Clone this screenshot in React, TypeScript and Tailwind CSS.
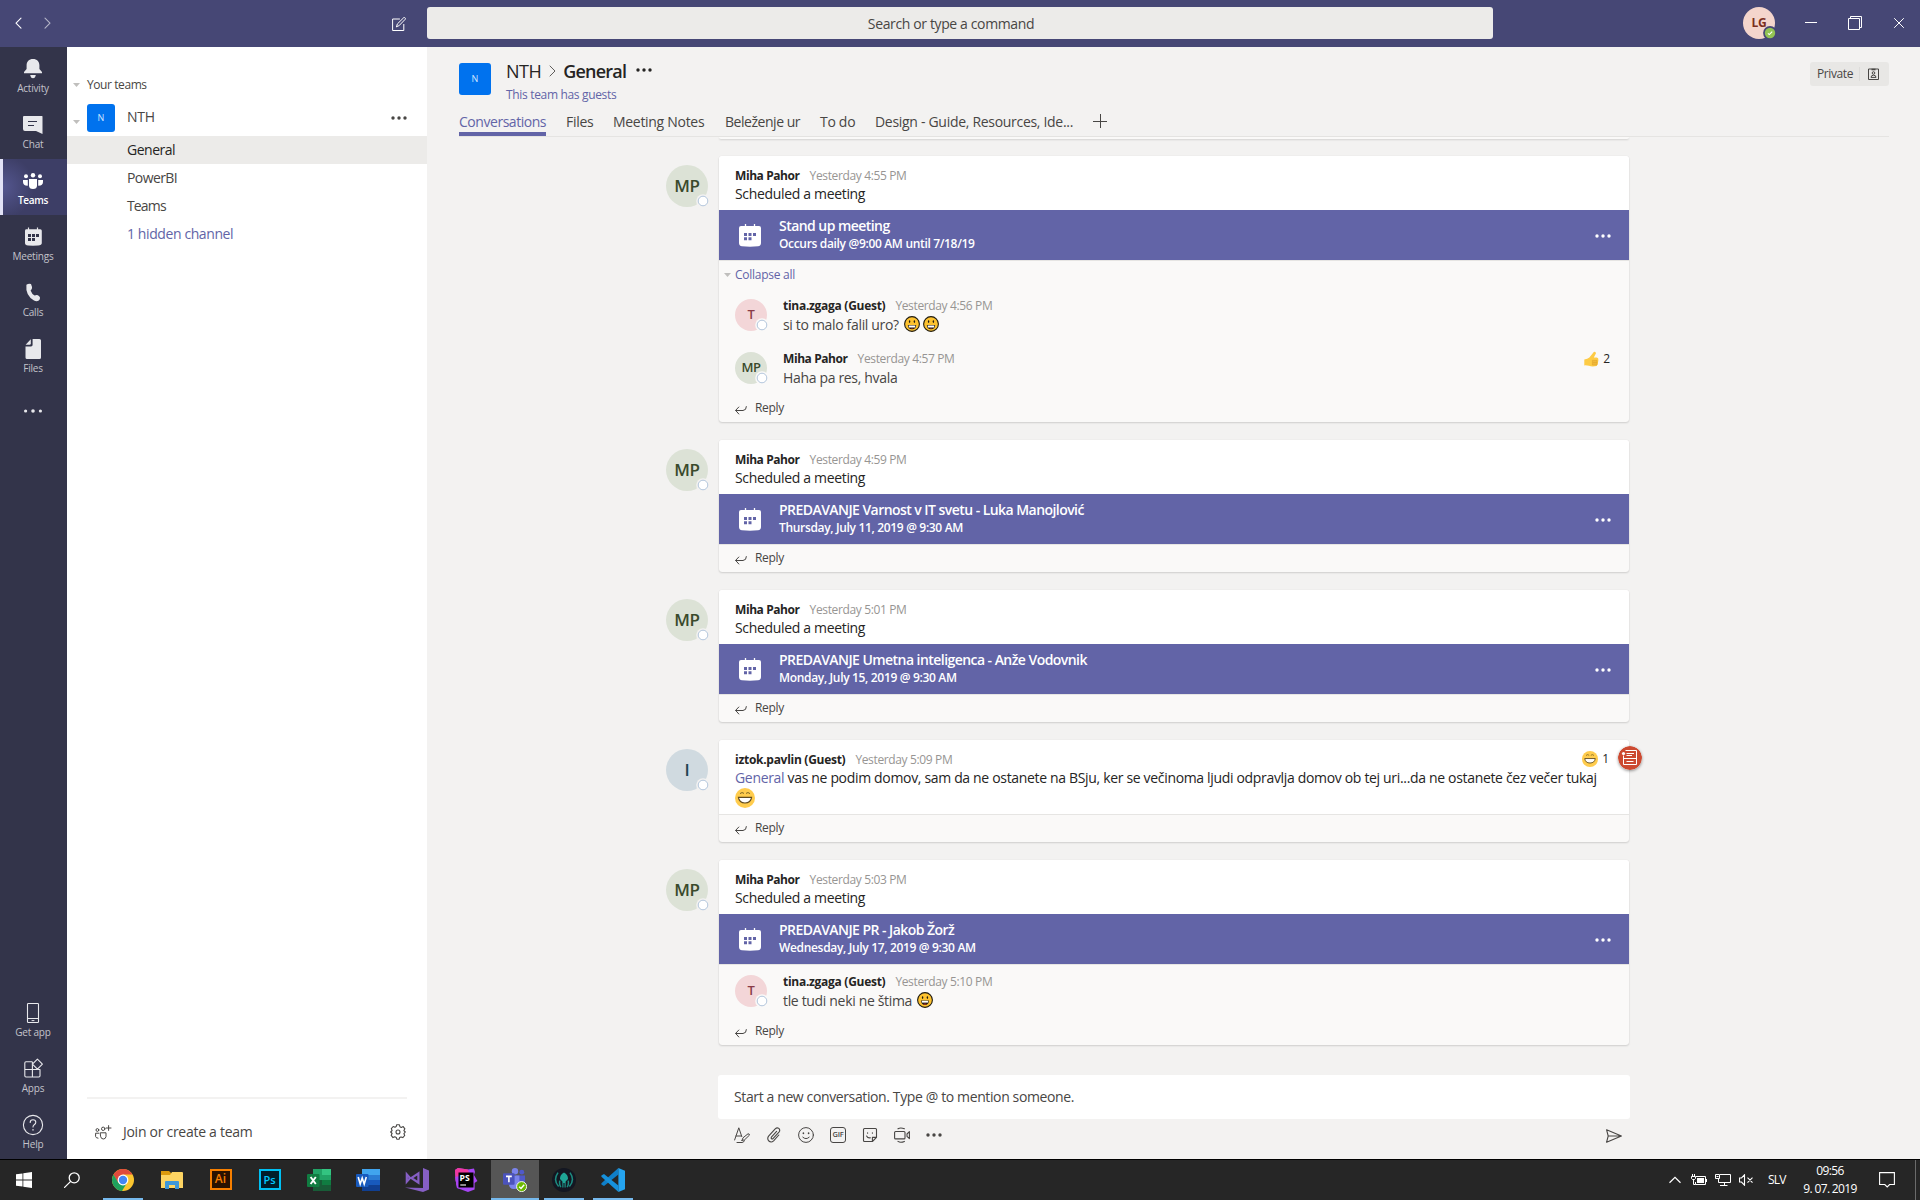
import type { ReactNode } from "react";

const svgLine = {
  fill: "none",
  stroke: "currentColor",
  strokeLinecap: "round",
  strokeLinejoin: "round",
} as const;

function Dots({ className }: { className?: string }) {
  return (
    <svg viewBox="0 0 16 4" className={`h-1 w-4 shrink-0 ${className ?? ""}`} fill="currentColor">
      <circle cx="2" cy="2" r="1.7" />
      <circle cx="8" cy="2" r="1.7" />
      <circle cx="14" cy="2" r="1.7" />
    </svg>
  );
}

function Caret() {
  return (
    <svg viewBox="0 0 7 4" className="h-1 w-[7px] shrink-0 text-[#c0bfbd]" fill="currentColor">
      <path d="M0 0H7L3.5 4Z" />
    </svg>
  );
}

/* ---------- Title bar ---------- */

function TitleBar() {
  return (
    <header className="flex h-[47px] shrink-0 items-start bg-[#464775] text-white">
      <svg viewBox="0 0 67 47" className="h-[47px] w-[67px] shrink-0" {...svgLine} strokeWidth="1.1">
        <path d="M21 18.2L16 23.2L21 28.2" />
        <path d="M45 18.2L50 23.2L45 28.2" opacity=".6" />
      </svg>
      <div className="flex h-[47px] w-[360px] shrink-0 items-center justify-end pr-[21px]">
        <svg viewBox="0 0 14 14" className="h-3.5 w-3.5" {...svgLine} strokeWidth="1">
          <path d="M7.5 2H.6V13.5H11.8V7.4" />
          <path d="M4.6 9.6L5.3 7L11.8 .6C12.8 .2 13.8 1.2 13.3 2.2L6.9 8.8L4.6 9.6Z" />
        </svg>
      </div>
      <div className="mt-[7px] flex h-8 w-[1066px] shrink-0 items-center justify-center rounded-[3px] bg-[#ecebe9] pr-[18px] text-[14px] tracking-[-0.37px] text-[#484644]">
        Search or type a command
      </div>
      <div className="relative mt-[7px] ml-[250px] flex h-8 w-8 shrink-0 items-center justify-center rounded-full bg-[#f4d5cc] text-[12px] font-bold tracking-[-0.3px] text-[#7b2f1e]">
        LG
        <svg viewBox="0 0 14 14" className="absolute -right-[2px] -bottom-[1px] h-3.5 w-3.5">
          <circle cx="7" cy="7" r="6.9" fill="#464775" />
          <circle cx="7" cy="7" r="5.2" fill="#92c353" />
          <path d="M4.9 7.3L6.3 8.6L9.2 5.6" fill="none" stroke="#fff" strokeWidth="1.1" />
        </svg>
      </div>
      <svg viewBox="0 0 145 47" className="h-[47px] w-[145px] shrink-0" fill="none" stroke="#fff" strokeWidth="1">
        <path d="M30 22.5H42" />
        <path d="M73.5 18.5H84.5V29.5H73.5ZM75.5 18V16.5H86.5V27.5H85" />
        <path d="M119.2 18.2L128.8 27.8M128.8 18.2L119.2 27.8" />
      </svg>
    </header>
  );
}

/* ---------- App rail ---------- */

const railIcons: Record<string, ReactNode> = {
  Activity: (
    <g fill="currentColor">
      <path d="M11 1C7 1 4.6 3.6 4.6 7.2V11L2 14V15.3H20V14L17.4 11V7.2C17.4 3.6 15 1 11 1Z" />
      <path d="M8.2 17H13.8C13.5 19 12.5 20.3 11 20.3S8.5 19 8.2 17Z" />
    </g>
  ),
  Chat: (
    <g>
      <path d="M2 2H20Q20.5 2 20.5 2.5V20L14 17H3Q1 17 1 15V3Q1 2 2 2Z" fill="currentColor" />
      <path d="M6 7.5H15M6 11.5H12" stroke="#33344a" strokeWidth="1.2" />
    </g>
  ),
  Teams: (
    <g fill="currentColor">
      <circle cx="4" cy="6.3" r="2" />
      <circle cx="11" cy="5.2" r="2.2" />
      <circle cx="18" cy="6.3" r="2" />
      <path d="M7 9H15V15.5Q15 19 11 19T7 15.5Z" />
      <path d="M1 10H5.8V15.4L5.5 15.8Q1 15.6 1 12Z" />
      <path d="M21 10H16.2V15.4L16.5 15.8Q21 15.6 21 12Z" />
    </g>
  ),
  Meetings: (
    <g>
      <path d="M6.5 1.5V5M15.5 1.5V5" stroke="currentColor" strokeWidth="1.2" />
      <path d="M4 3.2H18.3Q19.8 3.2 19.8 4.7V17Q19.8 19.3 16 19.6Q11 19.9 6 19.6Q3 19.3 3 17V4.7Q3 3.2 4 3.2Z" fill="currentColor" />
      <path d="M6 8H9V11H6ZM10 8H13V11H10ZM14 8H17V11H14ZM6 12H9V15H6ZM10 12H13V15H10Z" fill="#33344a" />
    </g>
  ),
  Calls: (
    <path
      d="M4.4 2.8Q6.5 1.2 9 1.9Q10.3 5 10 6.3Q9.6 7.8 8.6 8.5Q9.8 12 12.6 13.6Q14.2 12.6 15.2 13Q17.4 13.8 18 15.5Q18.2 17.3 16.8 18.6Q14.6 19.8 12 18.6Q3.2 13.4 4.4 2.8Z"
      fill="currentColor"
    />
  ),
  Files: (
    <g fill="currentColor">
      <path d="M10.6 1H17.5Q19 1 19 2.5V19.5Q19 21 17.5 21H5Q3.5 21 3.5 19.5V8.4H9Q10.6 8.4 10.6 7Z" />
      <path d="M8.8 1.3V5.6Q8.8 6.8 7.6 6.8H3.6Z" />
    </g>
  ),
  "Get app": (
    <g {...svgLine}>
      <rect x="5.5" y="1.5" width="11" height="19" rx=".8" strokeWidth="1.1" />
      <path d="M5.5 16.5H16.5M10 18.6H12" />
    </g>
  ),
  Apps: (
    <g {...svgLine} strokeWidth="1.1">
      <path d="M10 3.8H4Q2.8 3.8 2.8 5V17.8Q2.8 19 4 19H16.8Q18 19 18 17.8V12M2.8 11.5H18M10.4 4V19" />
      <path d="M15.4 1.2L20.4 6.2L15.4 11.2L10.4 6.2Z" fill="#33344a" />
    </g>
  ),
  Help: (
    <g {...svgLine} strokeWidth="1.1">
      <circle cx="11" cy="11" r="9.6" />
      <path d="M8.2 8.4Q8.2 5.8 11 5.8T13.8 8.3Q13.8 9.8 12.2 10.8Q11 11.6 11 13" />
      <path d="M11 15.6V16" strokeWidth="1.4" />
    </g>
  ),
};

function RailItem({ name, active }: { name: string; active?: boolean }) {
  return (
    <div
      className={
        active
          ? "flex h-14 flex-col items-center border-l-[3px] border-[#e2e2f6] bg-[radial-gradient(circle_at_left,#54568f,#3d3e66_45%)] pt-[11px] pr-1 text-white"
          : "flex h-14 flex-col items-center pt-[11px] pr-px text-[#e8e8ec]"
      }
    >
      <svg viewBox="0 0 22 22" className="h-[22px] w-[22px]">
        {railIcons[name]}
      </svg>
      <span
        className={
          active
            ? "text-[10px] leading-[16px] font-semibold tracking-[-0.35px]"
            : "text-[10px] leading-[16px] font-medium tracking-[-0.2px] text-[#c3c3cb]"
        }
      >
        {name}
      </span>
    </div>
  );
}

function Rail() {
  return (
    <nav className="flex w-[67px] shrink-0 flex-col bg-[#33344a]">
      <RailItem name="Activity" />
      <RailItem name="Chat" />
      <RailItem name="Teams" active />
      <RailItem name="Meetings" />
      <RailItem name="Calls" />
      <RailItem name="Files" />
      <div className="flex h-14 items-center justify-center pr-px text-[#e8e8ec]">
        <svg viewBox="0 0 18 4" className="h-1 w-[18px]" fill="currentColor">
          <circle cx="1.6" cy="2" r="1.6" />
          <circle cx="9" cy="2" r="1.8" />
          <circle cx="16.4" cy="2" r="1.6" />
        </svg>
      </div>
      <div className="mt-auto">
        <RailItem name="Get app" />
        <RailItem name="Apps" />
        <RailItem name="Help" />
      </div>
    </nav>
  );
}

/* ---------- Teams list ---------- */

function TeamsPanel() {
  return (
    <aside className="flex w-[360px] shrink-0 flex-col bg-white text-[14px] text-[#484644]">
      <div className="mt-[29px] flex h-[18px] items-center gap-[7px] pl-1.5 text-[12px] tracking-[-0.42px]">
        <Caret />
        <span>Your teams</span>
      </div>
      <div className="mt-2.5 flex h-7 items-center pl-1.5">
        <div className="mt-2">
          <Caret />
        </div>
        <div className="ml-[7px] flex h-7 w-7 items-center justify-center rounded-[3px] bg-[#0072ee] text-[9px] text-[#cfe4ff]">N</div>
        <span className="ml-3 pb-0.5 leading-[26px] tracking-[-0.3px]">NTH</span>
        <Dots className="mr-5 ml-auto" />
      </div>
      <div className="mt-1 h-7 bg-[#ecebe9] pl-[60px] leading-7 tracking-[-0.5px] text-[#252423]">General</div>
      <div className="h-7 pl-[60px] leading-7 tracking-[-0.6px]">PowerBI</div>
      <div className="h-7 pl-[60px] leading-7 tracking-[-0.85px]">Teams</div>
      <div className="h-7 pl-[60px] leading-7 tracking-[-0.4px] text-[#6264a7]">1 hidden channel</div>
      <div className="mx-5 mt-auto h-0.5 bg-[#f3f2f1]" />
      <div className="flex h-[60px] items-center pt-1.5 pr-[21px] pl-7">
        <svg viewBox="0 0 17 15" className="h-[15px] w-[17px]" {...svgLine} strokeWidth="1">
          <circle cx="2.4" cy="5" r="1.4" />
          <circle cx="8.2" cy="3.8" r="1.7" />
          <path d="M3.8 8.2H.6V11.5Q.8 13 3 13.2M5.6 7.8H11V11.6Q10.6 14 8.3 14T5.6 11.6ZM13.6 .6V5.4M11.2 3H16" />
        </svg>
        <span className="ml-[11px] pb-0.5 tracking-[-0.28px]">Join or create a team</span>
        <svg viewBox="0 0 16 16" className="ml-auto h-4 w-4" {...svgLine} strokeWidth="1.1">
          <circle cx="8" cy="8" r="2" />
          <path d="M6.6 .8H9.4L9.9 2.7L11.3 3.4L13.2 2.6L14.9 4.8L13.9 6.6L15.3 8L13.9 9.6L14.7 11.5L12.8 13.6L11 12.9L9.6 13.5L9.2 15.2H6.8L6.3 13.5L4.8 12.8L3 13.6L1.2 11.3L2.1 9.5L.7 8L2.1 6.5L1.3 4.6L3.2 2.5L5 3.2L6.2 2.6Z" />
        </svg>
      </div>
    </aside>
  );
}

/* ---------- Channel header ---------- */

function ChannelHeader() {
  return (
    <div className="mr-[31px] ml-8 h-[90px] shrink-0 border-b border-[#e5e4e2] text-[#252423]">
      <div className="flex h-[65px] items-start">
        <div className="mt-4 flex h-8 w-8 items-center justify-center rounded-[3px] bg-[#0072ee] text-[9px] text-[#cfe4ff]">N</div>
        <div className="ml-[15px] pt-3">
          <div className="flex h-6 items-center text-[18px] tracking-[-0.5px]">
            <span>NTH</span>
            <svg viewBox="0 0 7 12" className="mx-2 h-3 w-[7px]" {...svgLine} strokeWidth="1" stroke="#605e5c">
              <path d="M1 1L6 6L1 11" />
            </svg>
            <span className="-ml-px font-semibold tracking-[-0.8px]">General</span>
            <Dots className="mb-0.5 ml-2.5" />
          </div>
          <div className="pt-px text-[12px] leading-[22px] tracking-[-0.33px] text-[#6264a7]">This team has guests</div>
        </div>
        <div className="mt-[15px] ml-auto flex h-6 w-[79px] items-center rounded-[3px] bg-[#e8e7e5] pl-[7px] text-[12px] tracking-[-0.4px] text-[#484644]">
          <span className="w-[37px]">Private</span>
          <span className="ml-[5px] h-3.5 w-px bg-[#dddcda]" />
          <svg viewBox="0 0 11 12" className="ml-2 h-3 w-[11px]" fill="none" stroke="currentColor" strokeWidth="1">
            <path d="M.5 1H10.5V11.5H.5Z" />
            <path d="M3.5 1.5H7.5" strokeWidth="1.6" />
            <circle cx="5.5" cy="5" r="1.3" />
            <path d="M3 9.4Q3 7.2 5.5 7.2T8 9.4Z" />
          </svg>
        </div>
      </div>
      <div className="flex h-6 items-start gap-5 text-[14px] leading-[19px] tracking-[-0.3px] text-[#484644]">
        <span className="h-6 w-[87px] border-b-4 border-[#6264a7] tracking-[-0.46px] text-[#6264a7]">Conversations</span>
        <span className="w-[27px]">Files</span>
        <span className="w-[92px] whitespace-nowrap">Meeting Notes</span>
        <span className="w-[75px] tracking-[-0.46px] whitespace-nowrap">Beleženje ur</span>
        <span className="w-[35px] whitespace-nowrap">To do</span>
        <span className="w-[198px] whitespace-nowrap">Design - Guide, Resources, Ide...</span>
        <svg viewBox="0 0 14 14" className="mt-0.5 h-3.5 w-3.5" fill="none" stroke="currentColor">
          <path d="M7.5 0V14M0 7.5H14" />
        </svg>
      </div>
    </div>
  );
}

/* ---------- Emoji ---------- */

function Grin({ open }: { open?: boolean }) {
  return (
    <svg viewBox="0 0 16 16" className="h-4 w-4 shrink-0">
      <circle cx="8" cy="8" r="7.4" fill="#fdc22f" stroke="#1d1a12" strokeWidth="1.1" />
      <ellipse cx="5.6" cy="5.6" rx=".7" ry="1.3" fill="#1d1a12" />
      <ellipse cx="10.4" cy="5.6" rx=".7" ry="1.3" fill="#1d1a12" />
      {open ? (
        <g>
          <path d="M4 8.6H12Q11.8 13 8 13T4 8.6Z" fill="#1d1a12" />
          <path d="M4.8 8.8H11.2V10.6H4.8Z" fill="#fff" />
          <path d="M6.2 12Q8 10.8 9.8 12Q8 13.2 6.2 12Z" fill="#e8392c" />
        </g>
      ) : (
        <g>
          <path d="M3.8 9H12.2Q12 13.2 8 13.2T3.8 9Z" fill="#1d1a12" />
          <path d="M4.6 9.4H11.4L11 11.6H5Z" fill="#fff" />
          <path d="M6.2 12.4H9.8L8 13Z" fill="#e8392c" />
        </g>
      )}
    </svg>
  );
}

function Laugh({ className }: { className: string }) {
  return (
    <svg viewBox="0 0 20 20" className={className}>
      <circle cx="10" cy="10" r="10" fill="#ffcc4d" />
      <path d="M5 5.6Q7 3.6 9 5.4M11 5.4Q13 3.6 15 5.6" fill="none" stroke="#6e5a1e" strokeWidth=".9" />
      <path d="M3.4 9.4H16.6Q15.8 15 10 15T3.4 9.4Z" fill="#fff" stroke="#5f4a1e" strokeWidth="1.1" />
    </svg>
  );
}

function Thumb() {
  return (
    <svg viewBox="0 0 15 16" className="h-4 w-[15px]">
      <path d="M.3 8.4Q3.6 8.2 5.4 6.6L9.8 1Q11.4 .4 12 2.2L9.8 6.6H12.8Q14.6 6.8 14.4 9Q14.2 13 12.6 15Q8 16 5 14.8Q2.4 14.2 .3 14.4Z" fill="#fdcb45" />
      <path d="M8.4 9.4H13V14H8.4ZM9 11.6H13" fill="#f0b93a" stroke="#e0a52c" strokeWidth=".6" />
    </svg>
  );
}

/* ---------- Conversation ---------- */

type AvatarProps = { kind: "MP" | "T" | "I"; small?: boolean };

const avatarColors = {
  MP: "bg-[#dce2d6] text-[#3a4a2c]",
  T: "bg-[#f3d6d8] text-[#8a3b47]",
  I: "bg-[#d0dae0] text-[#1f4250]",
};

function Avatar({ kind, small }: AvatarProps) {
  const size = small ? "h-8 w-8 text-[13px]" : "h-[42px] w-[42px] text-[17px]";
  return (
    <div className={`relative flex shrink-0 items-center justify-center rounded-full font-semibold tracking-[-0.4px] ${size} ${avatarColors[kind]}`}>
      {kind}
      <svg viewBox="0 0 14 14" className="absolute -right-[2px] -bottom-[1px] h-3.5 w-3.5">
        <circle cx="7" cy="7" r="6.8" fill={small ? "#faf9f8" : "#f3f2f1"} />
        <circle cx="7" cy="7" r="4.8" fill="#fff" stroke="#b3c6dc" strokeWidth="1" />
      </svg>
    </div>
  );
}

function Byline({ name, time, guest }: { name: string; time: string; guest?: boolean }) {
  return (
    <div className="flex h-[19px] items-center gap-[10px] text-[12px]">
      <span className={guest ? "font-bold tracking-[-0.28px] text-[#252423]" : "font-bold tracking-[-0.42px] text-[#252423]"}>{name}</span>
      <span className="tracking-[-0.36px] text-[#979593]">{time}</span>
    </div>
  );
}

function Meeting({ title, when }: { title: string; when: string }) {
  return (
    <div className="flex h-[50px] items-center bg-[#6264a7] pr-[18px] pl-5 text-white">
      <svg viewBox="0 0 22 23" className="h-[23px] w-[22px]">
        <path d="M6.5 0V4M15.5 0V4" stroke="#fff" strokeWidth="1.3" />
        <path d="M2 2H20Q22 2 22 4V19Q22 22 19 22.3Q11 23.2 3 22.3Q0 22 0 19V4Q0 2 2 2Z" fill="#fff" />
        <path d="M5 9H8V12H5ZM9.5 9H12.5V12H9.5ZM14 9H17V12H14ZM5 13.2H8V16.2H5ZM9.5 13.2H12.5V16.2H9.5Z" fill="#6264a7" />
      </svg>
      <div className="ml-[18px] pb-px">
        <div className="text-[14px] leading-[19px] font-semibold tracking-[-0.55px]">{title}</div>
        <div className="text-[12px] leading-[18px] font-semibold tracking-[-0.33px]">{when}</div>
      </div>
      <Dots className="mt-0.5 ml-auto" />
    </div>
  );
}

function Reply({
  children,
  kind,
  name,
  time,
  guest,
  reaction,
}: {
  children: ReactNode;
  kind: "MP" | "T";
  name: string;
  time: string;
  guest?: boolean;
  reaction?: ReactNode;
}) {
  return (
    <div className="flex h-[53px] pr-[18px] pl-4">
      <Avatar kind={kind} small />
      <div className="-mt-[3px] ml-4">
        <Byline name={name} time={time} guest={guest} />
        <div className="flex h-[18px] items-center text-[14px] tracking-[-0.33px] text-[#484644]">{children}</div>
      </div>
      {reaction && <div className="-mt-[2px] ml-auto flex h-[18px] items-center gap-1 pr-px text-[12px] text-[#252423]">{reaction}</div>}
    </div>
  );
}

function ReplyAction() {
  return (
    <div className="flex h-[27px] items-center gap-2 pb-0.5 pl-4 text-[12px] tracking-[-0.3px] text-[#484644]">
      <svg viewBox="0 0 12 9" className="mt-[5px] h-[9px] w-3" {...svgLine} strokeWidth="1">
        <path d="M3.8 1L.6 4.4L3.8 8M.8 4.5H8Q11.4 4.3 11.4 .6" />
      </svg>
      Reply
    </div>
  );
}

type PostProps = {
  kind: "MP" | "I";
  name: string;
  time: string;
  guest?: boolean;
  body: ReactNode;
  meeting?: { title: string; when: string };
  corner?: ReactNode;
  children?: ReactNode;
};

function Post({ kind, name, time, guest, body, meeting, corner, children }: PostProps) {
  return (
    <article className="mb-[18px] flex items-start">
      <div className="mt-[9px] mr-[11px]">
        <Avatar kind={kind} />
      </div>
      <div className="relative w-[910px] rounded-[3px] bg-[#faf9f8] shadow-[0_1px_2px_rgba(0,0,0,0.14),0_0_1px_rgba(0,0,0,0.12)]">
        <div className="rounded-t-[3px] bg-white px-4 pt-2.5 pb-[7px]">
          <Byline name={name} time={time} guest={guest} />
          <div className="text-[14px] leading-[18px] tracking-[-0.33px] text-[#252423]">{body}</div>
        </div>
        {meeting && <Meeting {...meeting} />}
        <div className="border-t border-[#e6e5e3]">
          {children}
          <ReplyAction />
        </div>
        {corner}
      </div>
    </article>
  );
}

function Feed() {
  return (
    <div className="flex flex-1 flex-col pl-[239px]">
      <div className="ml-[53px] h-0.5 w-[910px] shrink-0 rounded-b-[3px] bg-[#faf9f8] shadow-[0_1px_2px_rgba(0,0,0,0.14)]" />
      <div className="h-[17px] shrink-0" />
      <Post kind="MP" name="Miha Pahor" time="Yesterday 4:55 PM" body="Scheduled a meeting" meeting={{ title: "Stand up meeting", when: "Occurs daily @9:00 AM until 7/18/19" }}>
        <div className="mb-[9px] flex h-[29px] items-center gap-1 pb-0.5 pl-[5px] text-[12px] tracking-[-0.27px] text-[#6264a7]">
          <Caret />
          Collapse all
        </div>
        <Reply kind="T" name="tina.zgaga (Guest)" time="Yesterday 4:56 PM" guest>
          <span className="mr-[5px]">si to malo falil uro?</span>
          <Grin />
          <span className="w-[3px]" />
          <Grin />
        </Reply>
        <div className="h-[43px]">
          <Reply
            kind="MP"
            name="Miha Pahor"
            time="Yesterday 4:57 PM"
            reaction={
              <>
                <Thumb />2
              </>
            }
          >
            Haha pa res, hvala
          </Reply>
        </div>
      </Post>
      <Post kind="MP" name="Miha Pahor" time="Yesterday 4:59 PM" body="Scheduled a meeting" meeting={{ title: "PREDAVANJE Varnost v IT svetu - Luka Manojlović", when: "Thursday, July 11, 2019 @ 9:30 AM" }} />
      <Post kind="MP" name="Miha Pahor" time="Yesterday 5:01 PM" body="Scheduled a meeting" meeting={{ title: "PREDAVANJE Umetna inteligenca - Anže Vodovnik", when: "Monday, July 15, 2019 @ 9:30 AM" }} />
      <Post
        kind="I"
        name="iztok.pavlin (Guest)"
        time="Yesterday 5:09 PM"
        guest
        body={
          <>
            <div className="whitespace-nowrap">
              <span className="text-[#6264a7]">General</span> vas ne podim domov, sam da ne ostanete na BSju, ker se večinoma ljudi odpravlja domov ob tej uri...da ne ostanete čez večer tukaj
            </div>
            <Laugh className="mt-px -mb-px h-5 w-5" />
          </>
        }
        corner={
          <>
            <div className="absolute top-[10px] right-5 flex h-[18px] items-center gap-1 text-[12px] text-[#252423]">
              <Laugh className="h-4 w-4" />1
            </div>
            <svg viewBox="0 0 24 24" className="absolute top-1.5 -right-[13px] h-6 w-6 rounded-full shadow-[0_1px_3px_rgba(0,0,0,0.4)]">
              <circle cx="12" cy="12" r="12" fill="#cc4a31" />
              <path d="M7.5 4.5H18.5V18.5H5.5V9.5M5.5 12.5H18.5M8.5 7.5H16M8.5 9.5H14M8.5 15.5H15.5" fill="none" stroke="#fff" />
              <circle cx="5.5" cy="7.5" r="1.6" fill="#fff" />
            </svg>
          </>
        }
      />
      <Post kind="MP" name="Miha Pahor" time="Yesterday 5:03 PM" body="Scheduled a meeting" meeting={{ title: "PREDAVANJE PR - Jakob Žorž", when: "Wednesday, July 17, 2019 @ 9:30 AM" }}>
        <div className="pt-[10px]">
          <div className="h-[43px]">
            <Reply kind="T" name="tina.zgaga (Guest)" time="Yesterday 5:10 PM" guest>
              <span className="mr-[5px]">tle tudi neki ne štima</span>
              <Grin open />
            </Reply>
          </div>
        </div>
      </Post>
    </div>
  );
}

function Composer() {
  return (
    <div className="mb-4 ml-[291px] w-[912px] shrink-0 text-[#484644]">
      <div className="flex h-11 items-center rounded-[3px] bg-white pb-px pl-4 text-[14px] tracking-[-0.38px]">Start a new conversation. Type @ to mention someone.</div>
      <div className="mt-2 flex h-4 items-center gap-4 pr-2 pl-4">
        <svg viewBox="0 0 16 16" className="h-4 w-4" {...svgLine} strokeWidth="1">
          <path d="M.6 13L4.8 .8L7.8 9.6M2 9H7M8 13.4L9 10.8L14 6.8Q15.6 6.6 15.4 8.2L10.6 12.8L8 13.4ZM3 15.5H8Q10 15.5 10.4 13.6" />
        </svg>
        <svg viewBox="0 0 16 16" className="h-4 w-4" {...svgLine} strokeWidth="1.1">
          <path d="M10.6 4.4L5.4 10.2Q4.8 11.2 5.6 11.8Q6.4 12.4 7.2 11.4L13.2 4.8Q14.4 3 12.8 1.4Q11 .2 9.2 1.8L2.6 9.2Q.8 11.6 2.8 14Q5.2 16 7.6 13.8L12.8 8" />
        </svg>
        <svg viewBox="0 0 16 16" className="h-4 w-4" {...svgLine} strokeWidth="1">
          <circle cx="8" cy="8" r="7.4" />
          <path d="M4.8 10.2Q8 13.2 11.2 10.2" />
          <path d="M5.4 6V6.4M10.6 6V6.4" strokeWidth="1.6" />
        </svg>
        <div className="flex h-4 w-4 items-center justify-center rounded-[3px] border border-[#484644] text-[7.5px] leading-none font-semibold tracking-[-0.2px]">GIF</div>
        <svg viewBox="0 0 16 16" className="h-4 w-4" {...svgLine} strokeWidth="1.1">
          <path d="M2.5 1.5H13.5Q14.5 1.5 14.5 2.5V10.4L10.4 14.5H2.5Q1.5 14.5 1.5 13.5V2.5Q1.5 1.5 2.5 1.5ZM10.4 14.3V10.4H14.3M4.6 9Q5.8 11.4 8.4 10.8M5.6 5.8V6.2M10.4 5.8V6.2" />
        </svg>
        <svg viewBox="0 0 16 16" className="h-4 w-4" {...svgLine} strokeWidth="1.1">
          <rect x=".6" y="4.5" width="10.4" height="7.4" rx="1" />
          <path d="M15.4 4.6V11.6L13 9.4V7ZM4 1.8Q6.5 .2 10.4 1.8M4 14.4Q6.5 16 10.4 14.4" />
        </svg>
        <Dots />
        <svg viewBox="0 0 16 14" className="mt-0.5 ml-auto h-3.5 w-4" {...svgLine} strokeWidth="1.1">
          <path d="M.6 .8L15.4 7L.6 13.2L2.2 7ZM2.2 7H15" />
        </svg>
      </div>
    </div>
  );
}

/* ---------- Windows taskbar ---------- */

function TaskSlot({ children, state }: { children: ReactNode; state?: "running" | "active" }) {
  return (
    <div className="flex h-10 w-[49px] shrink-0 justify-center">
      <div
        className={
          state === "active"
            ? "flex h-10 w-12 items-center justify-center border-b-2 border-[#76b9ed] bg-[#565656] pt-0.5"
            : state === "running"
              ? "flex h-10 w-10 items-center justify-center border-b-2 border-[#76b9ed] pt-0.5"
              : "flex h-10 w-10 items-center justify-center"
        }
      >
        {children}
      </div>
    </div>
  );
}

function Taskbar() {
  return (
    <footer className="flex h-[41px] shrink-0 border-t border-black bg-[#262626] text-white">
      <div className="flex w-12 shrink-0 items-center justify-center">
        <svg viewBox="0 0 16 16" className="h-4 w-4" fill="#fff">
          <path d="M0 2.3L6.5 1.4V7.6H0ZM7.3 1.3L16 0V7.6H7.3ZM0 8.4H6.5V14.6L0 13.7ZM7.3 8.4H16V16L7.3 14.7Z" />
        </svg>
      </div>
      <div className="flex w-[50px] shrink-0 items-center justify-center pr-0.5">
        <svg viewBox="0 0 16 16" className="h-4 w-4" {...svgLine} strokeWidth="1.3">
          <circle cx="10.2" cy="5.8" r="5" />
          <path d="M6.4 9.6L.6 15.4" />
        </svg>
      </div>
      <TaskSlot state="running">
        <svg viewBox="0 0 22 22" className="h-[22px] w-[22px]">
          <circle cx="11" cy="11" r="11" fill="#fbc52f" />
          <path d="M1.5 5.5A11 11 0 0 1 20.5 5.5H11L6 14Z" fill="#df4a3c" />
          <path d="M1.5 5.5A11 11 0 0 0 10 22L15 13.8L11 16L6.2 13.6Z" fill="#1fa15d" />
          <circle cx="11" cy="11" r="5.4" fill="#fff" />
          <circle cx="11" cy="11" r="4.2" fill="#4486f4" />
        </svg>
      </TaskSlot>
      <TaskSlot>
        <svg viewBox="0 0 22 18" className="h-[18px] w-[22px]">
          <path d="M0 0H8L10 2V6H0Z" fill="#dc9a0e" />
          <path d="M0 4L9 4L11 1H21Q22 1 22 2V17H0Z" fill="#fdd462" />
          <path d="M4 18V11Q4 10 5 10H17Q18 10 18 11V18H14V14H8V18Z" fill="#3d97d8" />
        </svg>
      </TaskSlot>
      <TaskSlot>
        <div className="mb-0.5 flex h-[21px] w-[22px] items-center justify-center border-2 border-[#f77f00] bg-[#2a1200] text-[12px] leading-none font-semibold text-[#f77f00]">Ai</div>
      </TaskSlot>
      <TaskSlot>
        <div className="mb-0.5 flex h-[21px] w-[22px] items-center justify-center border-2 border-[#00c0f3] bg-[#001d2a] text-[11px] leading-none font-semibold text-[#00c8ff]">Ps</div>
      </TaskSlot>
      <TaskSlot>
        <svg viewBox="0 0 24 22" className="h-[22px] w-6">
          <path d="M6 0H15V11H6Z" fill="#21a366" />
          <path d="M15 0H24V6H15Z" fill="#33c481" />
          <path d="M15 6H24V11H15Z" fill="#21a366" />
          <path d="M6 11H15V22H6Z" fill="#185c37" />
          <path d="M15 11H24V16H15Z" fill="#107c41" />
          <path d="M15 16H24V22H6V16Z" fill="#185c37" />
          <rect y="5" width="12.5" height="13" rx="1" fill="#107c41" />
          <path d="M3.6 8L8.8 15M8.8 8L3.6 15" stroke="#fff" strokeWidth="1.9" />
        </svg>
      </TaskSlot>
      <TaskSlot>
        <svg viewBox="0 0 24 22" className="h-[22px] w-6">
          <path d="M6 0H24V6H6Z" fill="#41a5ee" />
          <path d="M6 6H24V11H6Z" fill="#2b7cd3" />
          <path d="M6 11H24V16H6Z" fill="#185abd" />
          <path d="M6 16H24V22H6Z" fill="#103f91" />
          <rect y="5" width="12.5" height="13" rx="1" fill="#185abd" />
          <path d="M2.2 8L4.2 15L6.2 9L8.2 15L10.3 8" fill="none" stroke="#fff" strokeWidth="1.6" />
        </svg>
      </TaskSlot>
      <TaskSlot>
        <svg viewBox="0 0 24 24" className="h-6 w-6">
          <path d="M18 0L24 2.5V21.5L18 24L0 19.5L18 20Z" fill="#865fc5" />
          <path d="M1.8 6.4V13.6L5 10ZM13.4 5.4L6.4 10L13.4 14.6Z" fill="none" stroke="#865fc5" strokeWidth="2.2" />
        </svg>
      </TaskSlot>
      <TaskSlot>
        <svg viewBox="0 0 24 24" className="h-6 w-6">
          <path d="M1 2L4 0L14 1.6L20 .6L21 4L20 7L23.4 13L20.6 15V21.5L14 24L3 20L1.6 12Z" fill="#a745f5" />
          <path d="M1 2L4 0L14 1.6L15 5H5V19L2.6 17L1.6 12Z" fill="#f0389f" />
          <path d="M1.4 9L5 8V20.6L3 20L1.6 12Z" fill="#a745f5" />
          <rect x="4.5" y="4.5" width="15" height="15" fill="#000" />
          <text x="5.6" y="12.6" fontSize="8.6" fontWeight="700" fill="#fff" fontFamily="Open Sans, sans-serif">PS</text>
          <path d="M6.3 17H12" stroke="#fff" strokeWidth="1.1" />
        </svg>
      </TaskSlot>
      <TaskSlot state="active">
        <svg viewBox="0 0 24 24" className="h-6 w-6">
          <circle cx="12" cy="3.2" r="3.2" fill="#7b83eb" />
          <circle cx="18.8" cy="4.2" r="2.4" fill="#5059c9" />
          <path d="M13 7.6H22V14Q22 18 18 18H13Z" fill="#5059c9" />
          <path d="M6 7.6H16.4V15Q16.4 21 11 21T6 15Z" fill="#7b83eb" />
          <rect y="5.2" width="11.6" height="11.6" rx="1" fill="#4b53bc" />
          <path d="M3 8.4H8.8M5.9 8.4V14.2" stroke="#fff" strokeWidth="1.6" />
          <circle cx="18.6" cy="18.6" r="5" fill="#6bb700" stroke="#fff" strokeWidth=".9" />
          <path d="M16.2 18.8L18 20.4L21.2 16.8" fill="none" stroke="#fff" strokeWidth="1.4" />
        </svg>
      </TaskSlot>
      <TaskSlot state="running">
        <svg viewBox="0 0 24 24" className="h-6 w-6">
          <circle cx="12" cy="12" r="12" fill="#141722" />
          <path d="M12 4.4Q7.8 6.6 8 11L10.4 13.4V19.6H11.4V15H12.6V19.6H13.6V13.4L16 11Q16.2 6.6 12 4.4Z" fill="#1fa597" />
          <path d="M6 4.6Q.8 12 6.6 18.4M18 4.6Q23.2 12 17.4 18.4M7.8 12.6Q7 16 8.8 19.2M16.2 12.6Q17 16 15.2 19.2" fill="none" stroke="#1c8c80" strokeWidth="1.5" />
        </svg>
      </TaskSlot>
      <TaskSlot state="running">
        <svg viewBox="0 0 24 24" className="h-6 w-6">
          <path d="M17.4 0L17.4 6.6L3 18L.4 16.4V15.2Z" fill="#0f7fc9" />
          <path d="M17.4 24V17.4L3 6L.4 7.6V8.8Z" fill="#1691dc" />
          <path d="M17.4 0L24 2.8V21.2L17.4 24Z" fill="#25a4f0" />
        </svg>
      </TaskSlot>
      <div className="ml-auto flex items-center">
        <svg viewBox="0 0 12 8" className="h-2 w-3" fill="none" stroke="#fff" strokeWidth="1.2">
          <path d="M.5 6.8L6 1.4L11.5 6.8" />
        </svg>
        <svg viewBox="0 0 16 12" className="ml-2.5 h-3 w-4" fill="none" stroke="#fff">
          <path d="M5 2.5H14.5V10.5H4.5V8M15.5 5V8" />
          <path d="M6 4H13V9H6Z" fill="#fff" stroke="none" />
          <path d="M1.5 0V2.5M3.5 0V2.5M.5 2.5H4.5V4.5L3.5 5.5H1.5L.5 4.5ZM2.5 5.5V10.5H4.5" />
        </svg>
        <svg viewBox="0 0 16 14" className="ml-2 h-3.5 w-4" fill="none" stroke="#fff">
          <path d="M5 1.5H15.5V9.5H3.5V6M9.5 9.5V12.5M5 12.5H12.5M.5 1.5H4.5V5.5H.5ZM1.5 3.5H3.5" />
        </svg>
        <svg viewBox="0 0 15 12" className="ml-2 h-3 w-[15px]" fill="none" stroke="#fff" strokeWidth="1.1">
          <path d="M.5 4H2.5L5.5 .8V11.2L2.5 8H.5ZM8.5 3.6L13.5 8.6M13.5 3.6L8.5 8.6" />
        </svg>
        <span className="ml-3.5 w-[19px] text-[12px] tracking-[-0.8px]">SLV</span>
        <div className="ml-[15px] flex w-[56px] flex-col items-center text-[12px] leading-[18px] tracking-[-0.65px]">
          <span>09:56</span>
          <span className="whitespace-nowrap">9. 07. 2019</span>
        </div>
        <svg viewBox="0 0 16 16" className="ml-[21px] h-4 w-4" fill="none" stroke="#fff" strokeWidth="1.1">
          <path d="M.6 .6H15.4V12.5H10.6L8.2 15L5.8 12.5H.6Z" />
        </svg>
        <div className="ml-5 h-10 w-px bg-[#6b6b6b]" />
        <div className="w-1" />
      </div>
    </footer>
  );
}

export default function App() {
  return (
    <div className="flex h-[1200px] w-[1920px] flex-col overflow-hidden font-['Open_Sans',sans-serif]">
      <TitleBar />
      <div className="flex min-h-0 flex-1">
        <Rail />
        <TeamsPanel />
        <main className="flex min-w-0 flex-1 flex-col bg-[#f3f2f1]">
          <ChannelHeader />
          <Feed />
          <Composer />
        </main>
      </div>
      <Taskbar />
    </div>
  );
}
